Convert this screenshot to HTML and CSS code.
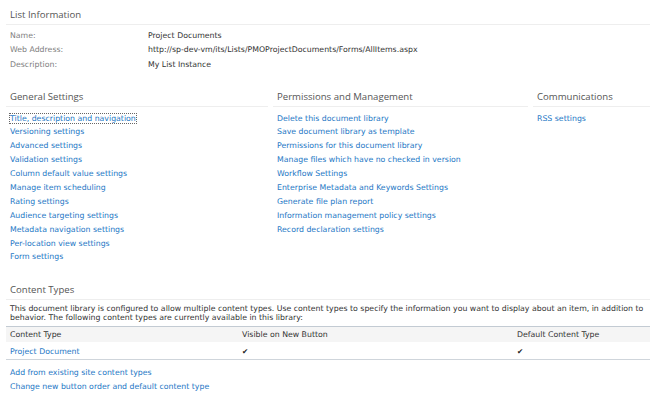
FILE: index.html
```html
<!DOCTYPE html>
<html lang="en">
<head>
    <meta charset="UTF-8">
    <title>Document Library Settings</title>
    <link rel="stylesheet" href="styles.css">
</head>
<body>

    <!-- List information -->
    <div class="section">
        <h3 class="section-title">List Information</h3>
        <table class="info">
            <tr><td class="info-label">Name:</td><td class="info-value">Project Documents</td></tr>
            <tr><td class="info-label">Web Address:</td><td class="info-value">http://sp-dev-vm/its/Lists/PMOProjectDocuments/Forms/AllItems.aspx</td></tr>
            <tr><td class="info-label">Description:</td><td class="info-value">My List Instance</td></tr>
        </table>
    </div>

    <!-- Settings columns -->
    <div class="settings">
        <div class="settings-col">
            <h3 class="section-title">General Settings</h3>
            <ul class="links">
                <li><a href="#" class="focused">Title, description and navigation</a></li>
                <li><a href="#">Versioning settings</a></li>
                <li><a href="#">Advanced settings</a></li>
                <li><a href="#">Validation settings</a></li>
                <li><a href="#">Column default value settings</a></li>
                <li><a href="#">Manage item scheduling</a></li>
                <li><a href="#">Rating settings</a></li>
                <li><a href="#">Audience targeting settings</a></li>
                <li><a href="#">Metadata navigation settings</a></li>
                <li><a href="#">Per-location view settings</a></li>
                <li><a href="#">Form settings</a></li>
            </ul>
        </div>
        <div class="settings-col">
            <h3 class="section-title">Permissions and Management</h3>
            <ul class="links">
                <li><a href="#">Delete this document library</a></li>
                <li><a href="#">Save document library as template</a></li>
                <li><a href="#">Permissions for this document library</a></li>
                <li><a href="#">Manage files which have no checked in version</a></li>
                <li><a href="#">Workflow Settings</a></li>
                <li><a href="#">Enterprise Metadata and Keywords Settings</a></li>
                <li><a href="#">Generate file plan report</a></li>
                <li><a href="#">Information management policy settings</a></li>
                <li><a href="#">Record declaration settings</a></li>
            </ul>
        </div>
        <div class="settings-col">
            <h3 class="section-title">Communications</h3>
            <ul class="links">
                <li><a href="#">RSS settings</a></li>
            </ul>
        </div>
    </div>

    <!-- Content types -->
    <div class="section content-types">
        <h3 class="section-title">Content Types</h3>
        <p class="ct-desc">This document library is configured to allow multiple content types. Use content types to specify the information you want to display about an item, in addition to behavior. The following content types are currently available in this library:</p>
        <table class="ct-table">
            <tr class="ct-head">
                <th class="ct-name">Content Type</th>
                <th class="ct-visible">Visible on New Button</th>
                <th>Default Content Type</th>
            </tr>
            <tr class="ct-row">
                <td><a href="#">Project Document</a></td>
                <td class="check">&#10004;</td>
                <td class="check">&#10004;</td>
            </tr>
        </table>
        <ul class="links ct-links">
            <li><a href="#">Add from existing site content types</a></li>
            <li><a href="#">Change new button order and default content type</a></li>
        </ul>
    </div>

</body>
</html>
```

FILE: styles.css
```css
body {
    margin: 0;
    padding: 0 0 0 6px;
    background: #fff;
    font-family: "DejaVu Sans", Verdana, sans-serif;
    font-size: 7.8px;
    color: #333;
    overflow: hidden;
}

a {
    color: #1d77c5;
    text-decoration: none;
}

/* section headings */
.section-title {
    margin: 0;
    padding: 0 0 3px 4px;
    font-family: "Open Sans", "DejaVu Sans", sans-serif;
    font-size: 9.6px;
    font-weight: normal;
    color: #555;
    border-bottom: 1px solid #eeeeee;
}

.section {
    padding-top: 8px;
}

/* list information */
.info {
    border-collapse: collapse;
    margin-top: 3px;
}
.info td {
    padding: 0 0 0 4px;
    height: 14.5px;
}
.info-label {
    width: 134px;
    color: #808080;
}
.info-value {
    color: #333;
}

/* settings columns */
.settings {
    display: grid;
    grid-template-columns: 262px 255px 1fr;
    column-gap: 5px;
    margin-top: 18px;
}

.links {
    list-style: none;
    margin: 0;
    padding: 5px 0 0 4px;
}
.links li {
    height: 13.9px;
    line-height: 13.9px;
}
.focused {
    outline: 1px dotted #666;
    outline-offset: 0;
}

/* content types */
.content-types {
    padding-top: 19px;
}
.ct-desc {
    margin: 4px 0 0 4px;
    line-height: 9px;
}
.ct-table {
    width: 100%;
    border-collapse: collapse;
    margin-top: 4px;
}
.ct-table th,
.ct-table td {
    text-align: left;
    font-weight: normal;
    padding: 0 0 0 4px;
    height: 15px;
}
.ct-head th {
    background: #f5f5f5;
    border-top: 1px solid #c3cbd3;
    color: #333;
}
.ct-row td {
    height: 16px;
    padding-top: 1px;
    border-bottom: 1px solid #cfd5db;
}
.ct-name {
    width: 228px;
}
.ct-visible {
    width: 271px;
}
.check {
    font-size: 7.5px;
    color: #222;
}
.ct-links {
    padding-top: 6px;
}
```
